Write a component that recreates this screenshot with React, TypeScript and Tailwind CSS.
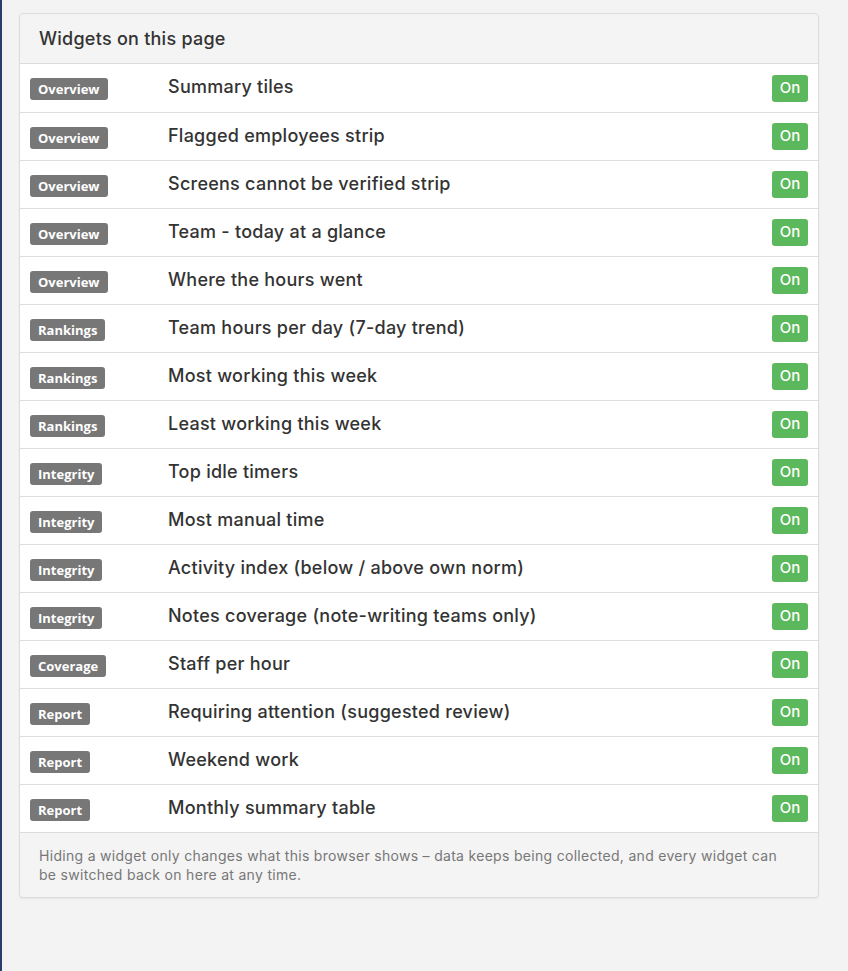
import React from "react";

const rows: [string, string][] = [
  ["Overview", "Summary tiles"],
  ["Overview", "Flagged employees strip"],
  ["Overview", "Screens cannot be verified strip"],
  ["Overview", "Team - today at a glance"],
  ["Overview", "Where the hours went"],
  ["Rankings", "Team hours per day (7-day trend)"],
  ["Rankings", "Most working this week"],
  ["Rankings", "Least working this week"],
  ["Integrity", "Top idle timers"],
  ["Integrity", "Most manual time"],
  ["Integrity", "Activity index (below / above own norm)"],
  ["Integrity", "Notes coverage (note-writing teams only)"],
  ["Coverage", "Staff per hour"],
  ["Report", "Requiring attention (suggested review)"],
  ["Report", "Weekend work"],
  ["Report", "Monthly summary table"],
];

const inter = { fontFamily: 'Inter, "Open Sans", "Liberation Sans", sans-serif' };
const open = { fontFamily: '"Open Sans", "Liberation Sans", sans-serif' };

export default function App() {
  return (
    <div
      className="min-h-[971px] w-full bg-[#f3f3f3] border-l-2 border-[#2a3e6c] pt-[13px] pb-[60px] pl-[17px] pr-[30px] text-[#333]"
      style={inter}
    >
      <div className="w-[800px] rounded-[4px] border border-[#dcdcdc] bg-[#f4f4f4] shadow-[0_1px_2px_rgba(0,0,0,0.06)] overflow-hidden">
        <div className="h-[50px] flex items-center px-[19px] pb-[1px] text-[18px] font-medium tracking-[0.25px] text-[#333] border-b border-[#dcdcdc]">
          Widgets on this page
        </div>
        <div className="bg-white">
          {rows.map(([tag, label], i) => (
            <div
              key={i}
              className={`h-[48px] flex items-center pl-[10px] pr-[10px] ${i > 0 ? "border-t border-[#dedede]" : ""}`}
            >
              <div className="w-[138px] shrink-0 flex items-center pt-[2px]">
                <span
                  className="inline-block rounded-[3px] bg-[#777777] text-white text-[13px] font-bold leading-[22px] h-[22px] px-[8px]"
                  style={open}
                >
                  {tag}
                </span>
              </div>
              <div className="flex-1 text-[18px] font-medium tracking-[0.25px] text-[#333] pb-[3px]">{label}</div>
              <div className="h-[27px] w-[36px] rounded-[3px] bg-[#5cb85c] text-white text-[15px] font-medium flex items-center justify-center">
                On
              </div>
            </div>
          ))}
        </div>
        <div className="border-t border-[#dcdcdc] pl-[19px] pr-[34px] pt-[13px] pb-[13px] text-[14px] tracking-[0.3px] leading-[19px] text-[#777]">
          Hiding a widget only changes what this browser shows – data keeps being collected, and every widget can be switched back on here at any time.
        </div>
      </div>
    </div>
  );
}
